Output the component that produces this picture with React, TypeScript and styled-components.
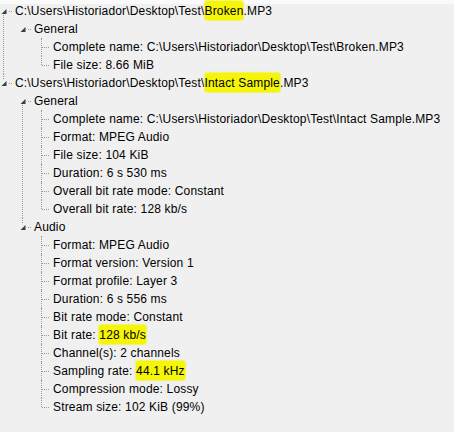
import React from "react"
import styled, { createGlobalStyle } from "styled-components"

type TreeNode = {
  label: React.ReactNode
  children?: TreeNode[]
}

const GlobalStyle = createGlobalStyle`
  html, body {
    margin: 0;
    padding: 0;
    width: 454px;
    height: 432px;
    overflow: hidden;
    background: linear-gradient(#fafafa 0, #fafafa 4px, #f0f0f0 4px);
  }
`

const Tree = styled.ul`
  margin: 0;
  padding: 2px 0 0 0;
  font-family: "Liberation Sans", Arial, sans-serif;
  font-size: 12px;
  letter-spacing: 0.16px;
  color: #000;
`

const Branch = styled.ul`
  margin: 0;
  padding: 0 0 0 19px;
`

const Item = styled.li<{ $first: boolean; $last: boolean; $leaf: boolean }>`
  position: relative;
  list-style: none;

  &::before {
    content: "";
    position: absolute;
    left: 3px;
    top: ${(p) => (p.$first && !p.$leaf ? 9 : 0)}px;
    ${(p) =>
      p.$last
        ? `height: ${p.$first && !p.$leaf ? 0 : 9}px;`
        : "bottom: 0;"}
    border-left: 1px dotted #9a9a9a;
  }
`

const Row = styled.div`
  display: flex;
  align-items: center;
  height: 18px;
  white-space: nowrap;
`

const Expander = styled.span`
  position: relative;
  z-index: 1;
  display: inline-flex;
  width: 8px;
  height: 8px;
  background: #f0f0f0;

  svg {
    display: block;
  }
`

const Connector = styled.span<{ $leaf: boolean }>`
  display: inline-block;
  margin-left: ${(p) => (p.$leaf ? 4 : 1)}px;
  width: ${(p) => (p.$leaf ? 7 : 3)}px;
  margin-right: ${(p) => (p.$leaf ? 4 : 3)}px;
  border-top: 1px dotted #9a9a9a;
`

const Label = styled.span`
  line-height: 18px;
`

const Mark = styled.span`
  background: #f5f50a;
  border-radius: 2px;
  padding: 3px 0 2px;
  box-shadow: 0 0 1px 1px rgba(245, 245, 10, 0.6);
`

const Triangle = () => (
  <svg width="8" height="8" viewBox="0 0 8 8" aria-hidden>
    <polygon points="6.5,2 6.5,7 1.5,7" fill="#3c3c3c" />
  </svg>
)

const base = "C:\\Users\\Historiador\\Desktop\\Test\\"

const data: TreeNode[] = [
  {
    label: (
      <>
        {base}
        <Mark>Broken</Mark>.MP3
      </>
    ),
    children: [
      {
        label: "General",
        children: [
          { label: `Complete name: ${base}Broken.MP3` },
          { label: "File size: 8.66 MiB" },
        ],
      },
    ],
  },
  {
    label: (
      <>
        {base}
        <Mark>Intact Sample</Mark>.MP3
      </>
    ),
    children: [
      {
        label: "General",
        children: [
          { label: `Complete name: ${base}Intact Sample.MP3` },
          { label: "Format: MPEG Audio" },
          { label: "File size: 104 KiB" },
          { label: "Duration: 6 s 530 ms" },
          { label: "Overall bit rate mode: Constant" },
          { label: "Overall bit rate: 128 kb/s" },
        ],
      },
      {
        label: "Audio",
        children: [
          { label: "Format: MPEG Audio" },
          { label: "Format version: Version 1" },
          { label: "Format profile: Layer 3" },
          { label: "Duration: 6 s 556 ms" },
          { label: "Bit rate mode: Constant" },
          {
            label: (
              <>
                Bit rate: <Mark>128 kb/s</Mark>
              </>
            ),
          },
          { label: "Channel(s): 2 channels" },
          {
            label: (
              <>
                Sampling rate: <Mark>44.1 kHz</Mark>
              </>
            ),
          },
          { label: "Compression mode: Lossy" },
          { label: "Stream size: 102 KiB (99%)" },
        ],
      },
    ],
  },
]

const Nodes = ({ nodes }: { nodes: TreeNode[] }) => (
  <>
    {nodes.map((node, i) => {
      const leaf = !node.children
      return (
        <Item key={i} $first={i === 0} $last={i === nodes.length - 1} $leaf={leaf}>
          <Row>
            {!leaf && (
              <Expander>
                <Triangle />
              </Expander>
            )}
            <Connector $leaf={leaf} />
            <Label>{node.label}</Label>
          </Row>
          {node.children && (
            <Branch>
              <Nodes nodes={node.children} />
            </Branch>
          )}
        </Item>
      )
    })}
  </>
)

export default function App() {
  return (
    <>
      <GlobalStyle />
      <Tree>
        <Nodes nodes={data} />
      </Tree>
    </>
  )
}
